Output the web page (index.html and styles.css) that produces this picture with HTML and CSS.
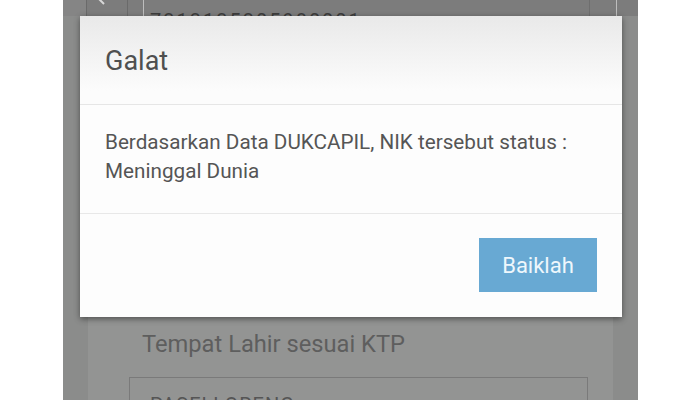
FILE: index.html
```html
<!DOCTYPE html>
<html lang="id">
<head>
<meta charset="utf-8">
<link rel="stylesheet" href="styles.css">
</head>
<body>
<div class="phone">
  <div class="topbar">
    <div class="edge"></div>
    <div class="navbtn">
      <svg width="41" height="16" viewBox="0 0 41 16"><path d="M11 -2 L17 4" stroke="#d8d8d8" stroke-width="2" fill="none"/></svg>
    </div>
    <div class="nikbox">
      <span class="digits">7313135305980001</span>
      <span class="boxline"></span>
    </div>
  </div>
  <div class="panel">
    <div class="label">Tempat Lahir sesuai KTP</div>
    <div class="field"><span class="fieldtext">PASELLORENG</span></div>
  </div>

  <div class="dialog">
    <div class="dlg-head">Galat</div>
    <div class="dlg-body">Berdasarkan Data DUKCAPIL, NIK tersebut status :<br>Meninggal Dunia</div>
    <div class="dlg-foot"><button class="btn">Baiklah</button></div>
  </div>
</div>
</body>
</html>
```
FILE: styles.css
```css
* { box-sizing: border-box; }
html, body { margin: 0; padding: 0; }
body {
  width: 700px;
  height: 400px;
  background: #ffffff;
  font-family: Roboto, "Noto Sans", Arial, sans-serif;
  overflow: hidden;
}
.phone {
  margin-left: 63px;
  width: 575px;
  height: 400px;
  background: #8b8c8b;
  position: relative;
  overflow: hidden;
  display: flex;
  flex-direction: column;
}
.topbar {
  height: 16px;
  flex: none;
  display: flex;
  background: #7c7c7c;
}
.edge {
  width: 24px;
  background: #858585;
  border-right: 1px solid #6a6a6a;
}
.navbtn {
  width: 41px;
  border-right: 1px solid #6a6a6a;
}
.navbtn svg { display: block; }
.nikbox {
  margin-left: 15px;
  margin-top: -14px;
  width: 474px;
  height: 54px;
  flex: none;
  border: 1.5px solid #bdbdbd;
  border-radius: 12px;
  position: relative;
  padding: 24px 0 0 6px;
}
.digits {
  font-size: 20px;
  letter-spacing: 2px;
  color: #3c3c3c;
  line-height: 20px;
}
.boxline {
  position: absolute;
  left: 445px;
  top: 0;
  height: 30px;
  border-left: 1px solid #6e6e6e;
}
.panel {
  flex: 1;
  margin: 0 25px;
  background: #939493;
  display: flex;
  flex-direction: column;
  padding: 0 25px 0 41px;
}
.label {
  margin-top: 314px;
  margin-left: 13px;
  font-size: 23.7px;
  line-height: 28px;
  color: #5e5e5e;
}
.field {
  margin-top: 19px;
  height: 50px;
  border: 1px solid #7a7a7a;
  padding: 15px 0 0 20px;
}
.fieldtext {
  font-size: 20px;
  letter-spacing: 1px;
  color: #555;
}
.dialog {
  position: absolute;
  left: 17px;
  top: 16px;
  width: 542px;
  height: 301px;
  background: #fdfdfd;
  box-shadow: 0 2px 6px rgba(0,0,0,0.45);
  display: flex;
  flex-direction: column;
}
.dlg-head {
  height: 89px;
  padding: 29px 0 0 25px;
  font-size: 27px;
  line-height: 32px;
  color: #4f4f4f;
  background: linear-gradient(#e9e9e9, #fcfcfc 85%);
  border-bottom: 1px solid #e6e6e6;
}
.dlg-body {
  height: 109px;
  padding: 23px 0 0 25px;
  font-size: 20.7px;
  line-height: 29px;
  color: #555;
  border-bottom: 1px solid #e8e8e8;
}
.dlg-foot {
  flex: 1;
  display: flex;
  justify-content: flex-end;
  align-items: flex-start;
  padding: 24px 25px 0 0;
}
.btn {
  width: 118px;
  height: 54px;
  border: none;
  background: #68a9d3;
  color: #eef7fc;
  font-family: Roboto, "Noto Sans", Arial, sans-serif;
  font-size: 22px;
  padding: 0;
}
```
